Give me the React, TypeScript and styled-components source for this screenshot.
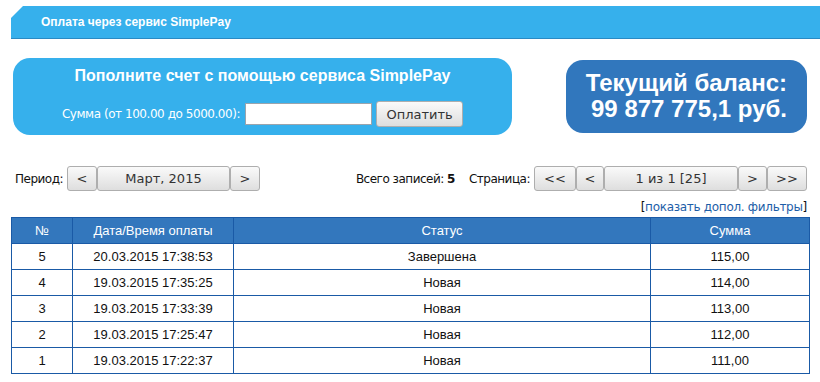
import { createGlobalStyle, styled } from "styled-components";

const GlobalStyle = createGlobalStyle`
  html, body { margin: 0; padding: 0; background: #ffffff; }
  body { font-family: "DejaVu Sans", sans-serif; color: #222; }
`;

const payments = [
  { id: 5, date: "20.03.2015 17:38:53", status: "Завершена", sum: "115,00" },
  { id: 4, date: "19.03.2015 17:35:25", status: "Новая", sum: "114,00" },
  { id: 3, date: "19.03.2015 17:33:39", status: "Новая", sum: "113,00" },
  { id: 2, date: "19.03.2015 17:25:47", status: "Новая", sum: "112,00" },
  { id: 1, date: "19.03.2015 17:22:37", status: "Новая", sum: "111,00" },
];

const App = () => {
  return (
    <Page>
      <GlobalStyle />
      <HeaderBar>Оплата через сервис SimplePay</HeaderBar>
      <Content>
        <TopRow>
          <PayPanel>
            <PanelTitle>Пополните счет с помощью сервиса SimplePay</PanelTitle>
            <PayForm>
              <SumLabel>Сумма (от 100.00 до 5000.00):</SumLabel>
              <SumInput type="text" />
              <GrayButton $width={87} $height={26}>Оплатить</GrayButton>
            </PayForm>
          </PayPanel>
          <BalanceBox>
            Текущий баланс:
            <br />
            99 877 775,1 руб.
          </BalanceBox>
        </TopRow>

        <NavRow>
          <NavGroup>
            <NavLabel>Период:</NavLabel>
            <GrayButton $width={30}>&lt;</GrayButton>
            <GrayButton $width={133}>Март, 2015</GrayButton>
            <GrayButton $width={30}>&gt;</GrayButton>
          </NavGroup>
          <NavGroup>
            <NavLabel>
              Всего записей: <b>5</b>
            </NavLabel>
            <NavLabel $gapLeft={10}>Страница:</NavLabel>
            <GrayButton $width={42}>&lt;&lt;</GrayButton>
            <GrayButton $width={28}>&lt;</GrayButton>
            <GrayButton $width={134}>1 из 1 [25]</GrayButton>
            <GrayButton $width={29}>&gt;</GrayButton>
            <GrayButton $width={40}>&gt;&gt;</GrayButton>
          </NavGroup>
        </NavRow>

        <FilterRow>
          [<FilterLink href="#">показать допол. фильтры</FilterLink>]
        </FilterRow>

        <Table>
          <colgroup>
            <col style={{ width: 61 }} />
            <col style={{ width: 161 }} />
            <col style={{ width: 417 }} />
            <col />
          </colgroup>
          <thead>
            <tr>
              <Th>№</Th>
              <Th>Дата/Время оплаты</Th>
              <Th>Статус</Th>
              <Th>Сумма</Th>
            </tr>
          </thead>
          <tbody>
            {payments.map((p) => (
              <tr key={p.id}>
                <Td>{p.id}</Td>
                <Td>{p.date}</Td>
                <Td>{p.status}</Td>
                <Td>{p.sum}</Td>
              </tr>
            ))}
          </tbody>
        </Table>
      </Content>
    </Page>
  );
};
export default App;

const Page = styled.div`
  padding: 6px 0 0 11px;
`;

const HeaderBar = styled.div`
  height: 32px;
  border-bottom: 1px solid #2a8ac4;
  background: #36b0ec;
  clip-path: polygon(12px 0, 100% 0, 100% 100%, 0 100%, 0 12px);
  color: #ffffff;
  font-family: "Liberation Sans", Arial, sans-serif;
  font-weight: bold;
  font-size: 12px;
  line-height: 32px;
  padding-left: 30px;
`;

const Content = styled.div`
  width: 799px;
`;

const TopRow = styled.div`
  display: flex;
  justify-content: space-between;
  align-items: center;
  margin-top: 19px;
  padding: 0 3px 0 2px;
`;

const PayPanel = styled.div`
  width: 499px;
  height: 77px;
  box-sizing: border-box;
  border-radius: 17px;
  background: #36b0ec;
  display: flex;
  flex-direction: column;
  align-items: center;
  padding-top: 8px;
`;

const PanelTitle = styled.div`
  color: #ffffff;
  font-family: "Liberation Sans", Arial, sans-serif;
  font-weight: bold;
  font-size: 16px;
  line-height: 20px;
`;

const PayForm = styled.div`
  display: flex;
  align-items: center;
  gap: 4px;
  margin-top: 15px;
`;

const SumLabel = styled.span`
  color: #ffffff;
  font-size: 12px;
  letter-spacing: -0.45px;
  margin-right: 1px;
`;

const SumInput = styled.input`
  width: 127px;
  height: 22px;
  box-sizing: border-box;
  border: 1px solid #9aa4ad;
  background: #ffffff;
  margin: 0;
`;

const BalanceBox = styled.div`
  width: 241px;
  height: 73px;
  box-sizing: border-box;
  border-radius: 17px;
  background: #3177bd;
  color: #ffffff;
  font-family: "Liberation Sans", Arial, sans-serif;
  font-weight: bold;
  font-size: 24px;
  line-height: 26px;
  text-align: right;
  padding: 10px 20px 0 0;
`;

const NavRow = styled.div`
  display: flex;
  justify-content: space-between;
  align-items: center;
  margin-top: 31px;
  padding: 0 3px 0 4px;
`;

const NavGroup = styled.div`
  display: flex;
  align-items: center;
`;

const NavLabel = styled.span<{ $gapLeft?: number }>`
  font-size: 12px;
  letter-spacing: -0.5px;
  color: #111;
  margin-left: ${(p) => p.$gapLeft ?? 0}px;
  margin-right: 4px;
`;

const GrayButton = styled.button<{ $width: number; $height?: number }>`
  width: ${(p) => p.$width}px;
  height: ${(p) => p.$height ?? 25}px;
  box-sizing: border-box;
  margin: 0;
  padding: 0;
  border: 1px solid #aeaeae;
  border-radius: 3px;
  background: linear-gradient(#fafafa, #dedede);
  font-family: "DejaVu Sans", sans-serif;
  font-size: 13px;
  color: #333;
`;

const FilterRow = styled.div`
  text-align: right;
  padding-right: 3px;
  margin-top: 9px;
  font-size: 12px;
  letter-spacing: -0.3px;
  line-height: 15px;
  color: #111;
`;

const FilterLink = styled.a`
  color: #1d5ea8;
  text-decoration: none;
`;

const Table = styled.table`
  width: 799px;
  margin-top: 2px;
  border-collapse: collapse;
  table-layout: fixed;
  font-family: "Liberation Sans", Arial, sans-serif;
  font-size: 13px;
`;

const Th = styled.th`
  height: 25px;
  padding: 0;
  border: 1px solid #1a5aa6;
  background: #3377bd;
  color: #ffffff;
  font-weight: normal;
  text-align: center;
`;

const Td = styled.td`
  height: 25px;
  padding: 0;
  border: 1px solid #1a5aa6;
  color: #111;
  text-align: center;
`;
